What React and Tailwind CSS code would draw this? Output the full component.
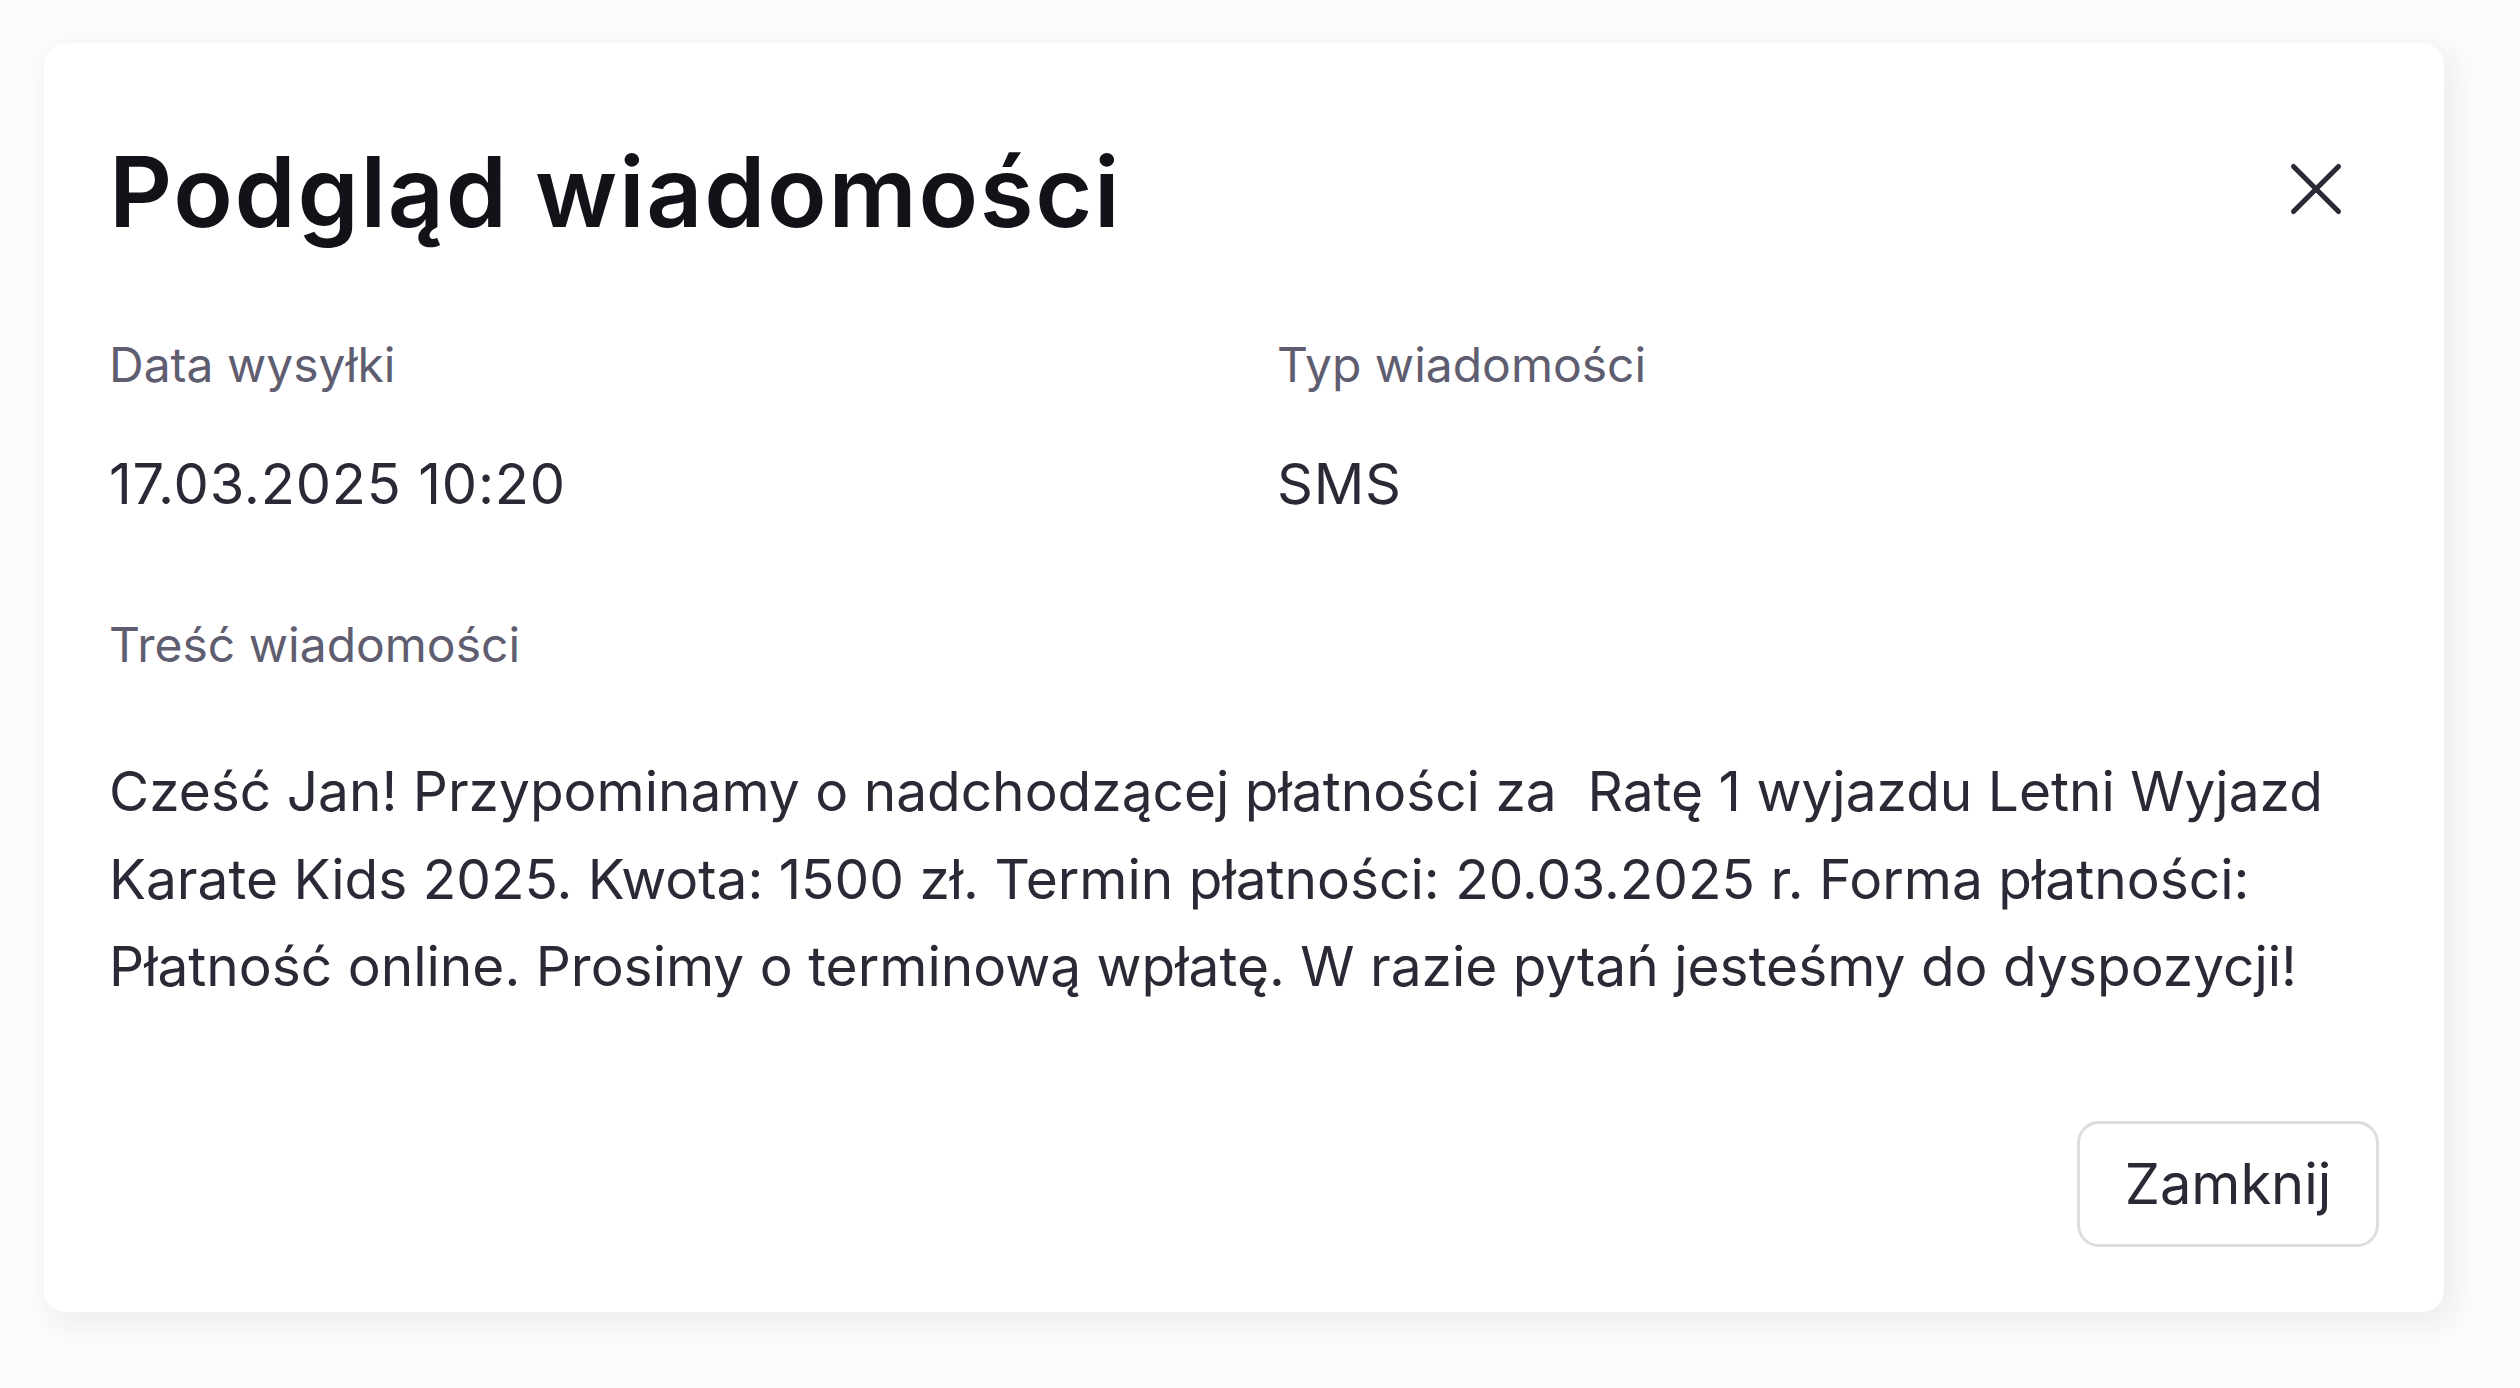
import React from 'react';
import { X } from 'lucide-react';

const message = {
    sentAt: '17.03.2025 10:20',
    type: 'SMS',
    body: 'Cześć Jan! Przypominamy o nadchodzącej płatności za \u00a0Ratę 1 wyjazdu Letni Wyjazd Karate Kids 2025. Kwota: 1500 zł. Termin płatności: 20.03.2025 r. Forma płatności: Płatność online. Prosimy o terminową wpłatę. W razie pytań jesteśmy do dyspozycji!',
};

const Field = ({ label, value }) => (
    <div>
        <p className="text-[48px] leading-[64px] text-[#5f5d70]">{label}</p>
        <p className="mt-[49px] text-[56px] leading-[76px] tracking-[0.8px] text-[#2a2a36]">{value}</p>
    </div>
);

const App = () => {
    return (
        <div className="min-h-screen bg-[#fbfbfb] pt-[43px] pl-[44px]" style={{ fontFamily: 'Inter, "Noto Sans", sans-serif' }}>
            <div className="w-[2400px] rounded-[22px] bg-white px-[65px] pt-[90px] pb-[65px] shadow-[8px_10px_22px_6px_rgba(30,30,60,0.05)]">
                {/* Header */}
                <div className="flex items-center justify-between">
                    <h2 className="text-[98px] leading-[118px] font-semibold tracking-[1.7px] text-[#121218]">Podgląd wiadomości</h2>
                    <button className="mr-[18px] mb-[6px] text-[#2a2a36]">
                        <X size={90} strokeWidth={1.35} />
                    </button>
                </div>

                {/* Meta */}
                <div className="mt-[82px] grid grid-cols-2 gap-x-[66px]">
                    <Field label="Data wysyłki" value={message.sentAt} />
                    <Field label="Typ wiadomości" value={message.type} />
                </div>

                {/* Body */}
                <div className="mt-[91px]">
                    <p className="text-[48px] leading-[64px] text-[#5f5d70]">Treść wiadomości</p>
                    <p className="mt-[71px] text-[55px] leading-[87.5px] text-[#2a2a36]">{message.body}</p>
                </div>

                {/* Footer */}
                <div className="mt-[110px] flex justify-end">
                    <button className="h-[126px] w-[302px] rounded-[22px] border-[3px] border-[#dddde0] bg-white text-[56px] text-[#2a2a36]">
                        Zamknij
                    </button>
                </div>
            </div>
        </div>
    );
};

export default App;
